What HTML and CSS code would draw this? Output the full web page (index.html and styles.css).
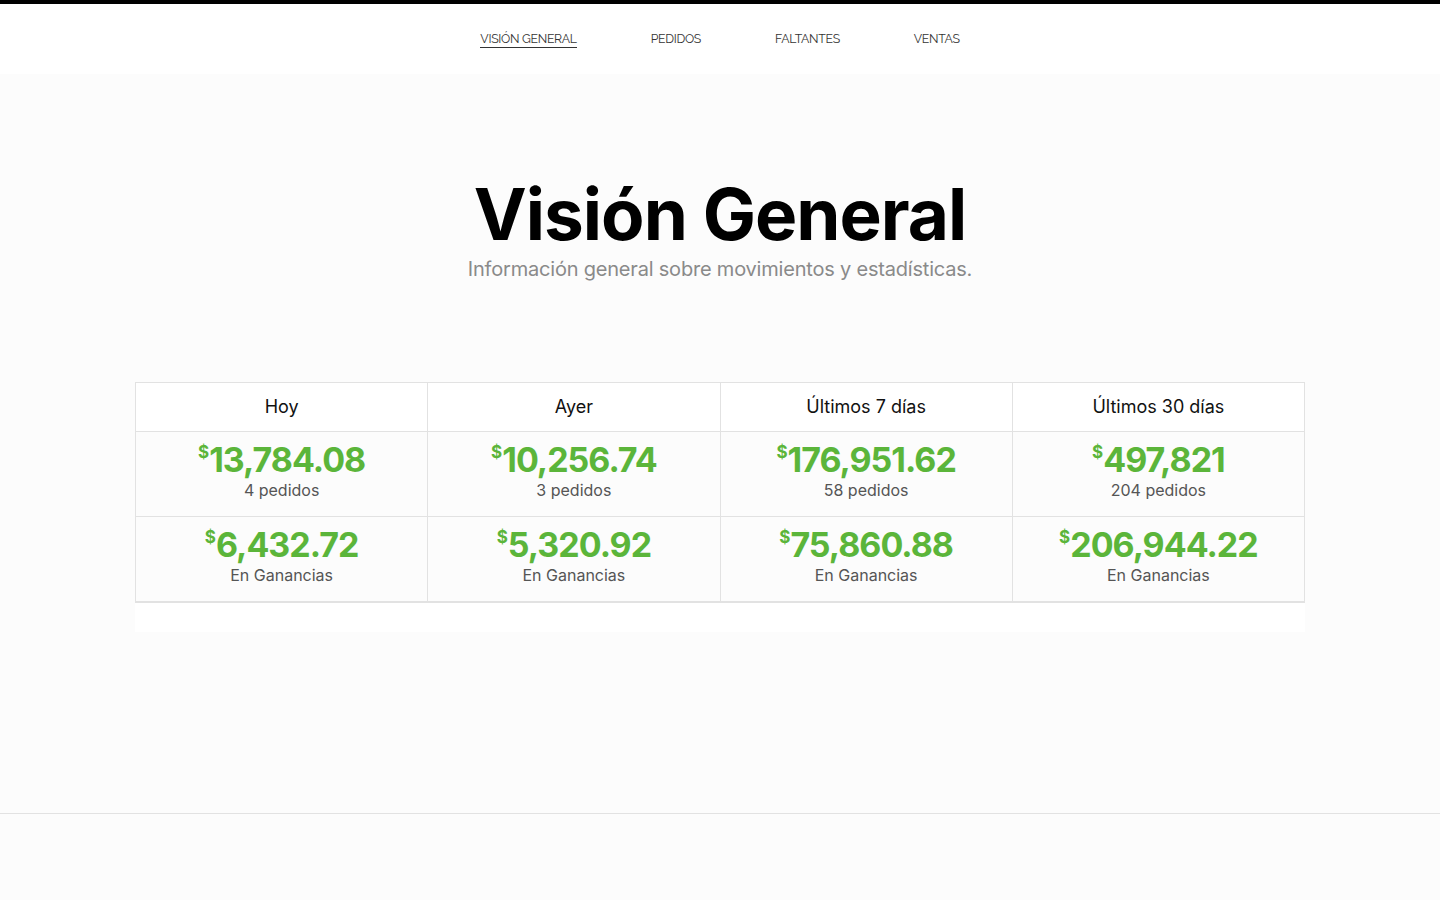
FILE: index.html
```html
<!DOCTYPE html>
<html lang="es">
<head>
<meta charset="utf-8">
<title>Visión General</title>
<link rel="stylesheet" href="styles.css">
</head>
<body>
<header class="topbar">
  <nav class="nav">
    <a class="nav-link active" href="#">VISIÓN GENERAL</a>
    <a class="nav-link" href="#">PEDIDOS</a>
    <a class="nav-link" href="#">FALTANTES</a>
    <a class="nav-link" href="#">VENTAS</a>
  </nav>
</header>
<main class="main">
  <section class="hero">
    <h1 class="title">Visión General</h1>
    <p class="subtitle">Información general sobre movimientos y estadísticas.</p>
  </section>
  <section class="panel">
    <table class="stats">
      <thead>
        <tr>
          <th>Hoy</th>
          <th>Ayer</th>
          <th>Últimos 7 días</th>
          <th>Últimos 30 días</th>
        </tr>
      </thead>
      <tbody>
        <tr>
          <td><div class="amount"><span class="cur">$</span>13,784.08</div><div class="note">4 pedidos</div></td>
          <td><div class="amount"><span class="cur">$</span>10,256.74</div><div class="note">3 pedidos</div></td>
          <td><div class="amount"><span class="cur">$</span>176,951.62</div><div class="note">58 pedidos</div></td>
          <td><div class="amount"><span class="cur">$</span>497,821</div><div class="note">204 pedidos</div></td>
        </tr>
        <tr>
          <td><div class="amount"><span class="cur">$</span>6,432.72</div><div class="note">En Ganancias</div></td>
          <td><div class="amount"><span class="cur">$</span>5,320.92</div><div class="note">En Ganancias</div></td>
          <td><div class="amount"><span class="cur">$</span>75,860.88</div><div class="note">En Ganancias</div></td>
          <td><div class="amount"><span class="cur">$</span>206,944.22</div><div class="note">En Ganancias</div></td>
        </tr>
      </tbody>
    </table>
  </section>
</main>
<footer class="footer"></footer>
</body>
</html>
```
FILE: styles.css
```css
* { box-sizing: border-box; }
html, body { margin: 0; padding: 0; }
body {
  background: #fcfcfc;
  font-family: "Lato", "Open Sans", sans-serif;
  color: #222;
  border-top: 4px solid #000;
  min-height: 900px;
}
.topbar {
  background: #fff;
  height: 70px;
  display: flex;
  justify-content: center;
  align-items: center;
}
.nav {
  display: flex;
  gap: 74px;
  padding-top: 1px;
}
.nav-link {
  font-family: "Raleway", "Lato", sans-serif;
  font-size: 12.3px;
  color: #333;
  text-decoration: none;
  letter-spacing: -0.3px;
  padding-bottom: 1px;
  border-bottom: 1px solid transparent;
}
.nav-link.active { border-bottom-color: #333; }
.main {
  height: 740px;
  border-bottom: 1px solid #e2e2e2;
  padding-top: 100px;
}
.hero { text-align: center; }
.title {
  margin: 0;
  font-family: "Inter", sans-serif;
  font-weight: 700;
  font-size: 71px;
  line-height: 80px;
  letter-spacing: -1px;
  color: #000;
}
.subtitle {
  margin: 3px 0 0;
  font-family: "Inter", sans-serif;
  font-size: 20px;
  color: #8a8a8a;
  letter-spacing: -0.2px;
}
.panel {
  width: 1170px;
  margin: 101px auto 0;
  background: #fff;
  padding-bottom: 29px;
}
.stats {
  width: 100%;
  border-collapse: collapse;
  table-layout: fixed;
  border-bottom: 2px solid #e2e2e2;
}
.stats th, .stats td {
  border: 1px solid #e2e2e2;
  text-align: center;
}
.stats th {
  height: 49px;
  padding-bottom: 3px;
  font-family: "Inter", sans-serif;
  font-weight: 400;
  font-size: 18px;
  color: #111;
  background: #fff;
}
.stats td {
  height: 85px;
  background: #fcfcfc;
  vertical-align: top;
  padding-top: 0;
}
.amount {
  font-family: "Inter", sans-serif;
  font-weight: 700;
  font-size: 34px;
  line-height: 40px;
  color: #5bb53a;
  letter-spacing: -1px;
}
.cur {
  font-size: 17px;
  vertical-align: 14px;
  margin-right: 1px;
}
.note {
  font-family: "Inter", sans-serif;
  font-size: 16px;
  color: #555;
  margin-top: 0;
}
.footer { height: 86px; }
```
